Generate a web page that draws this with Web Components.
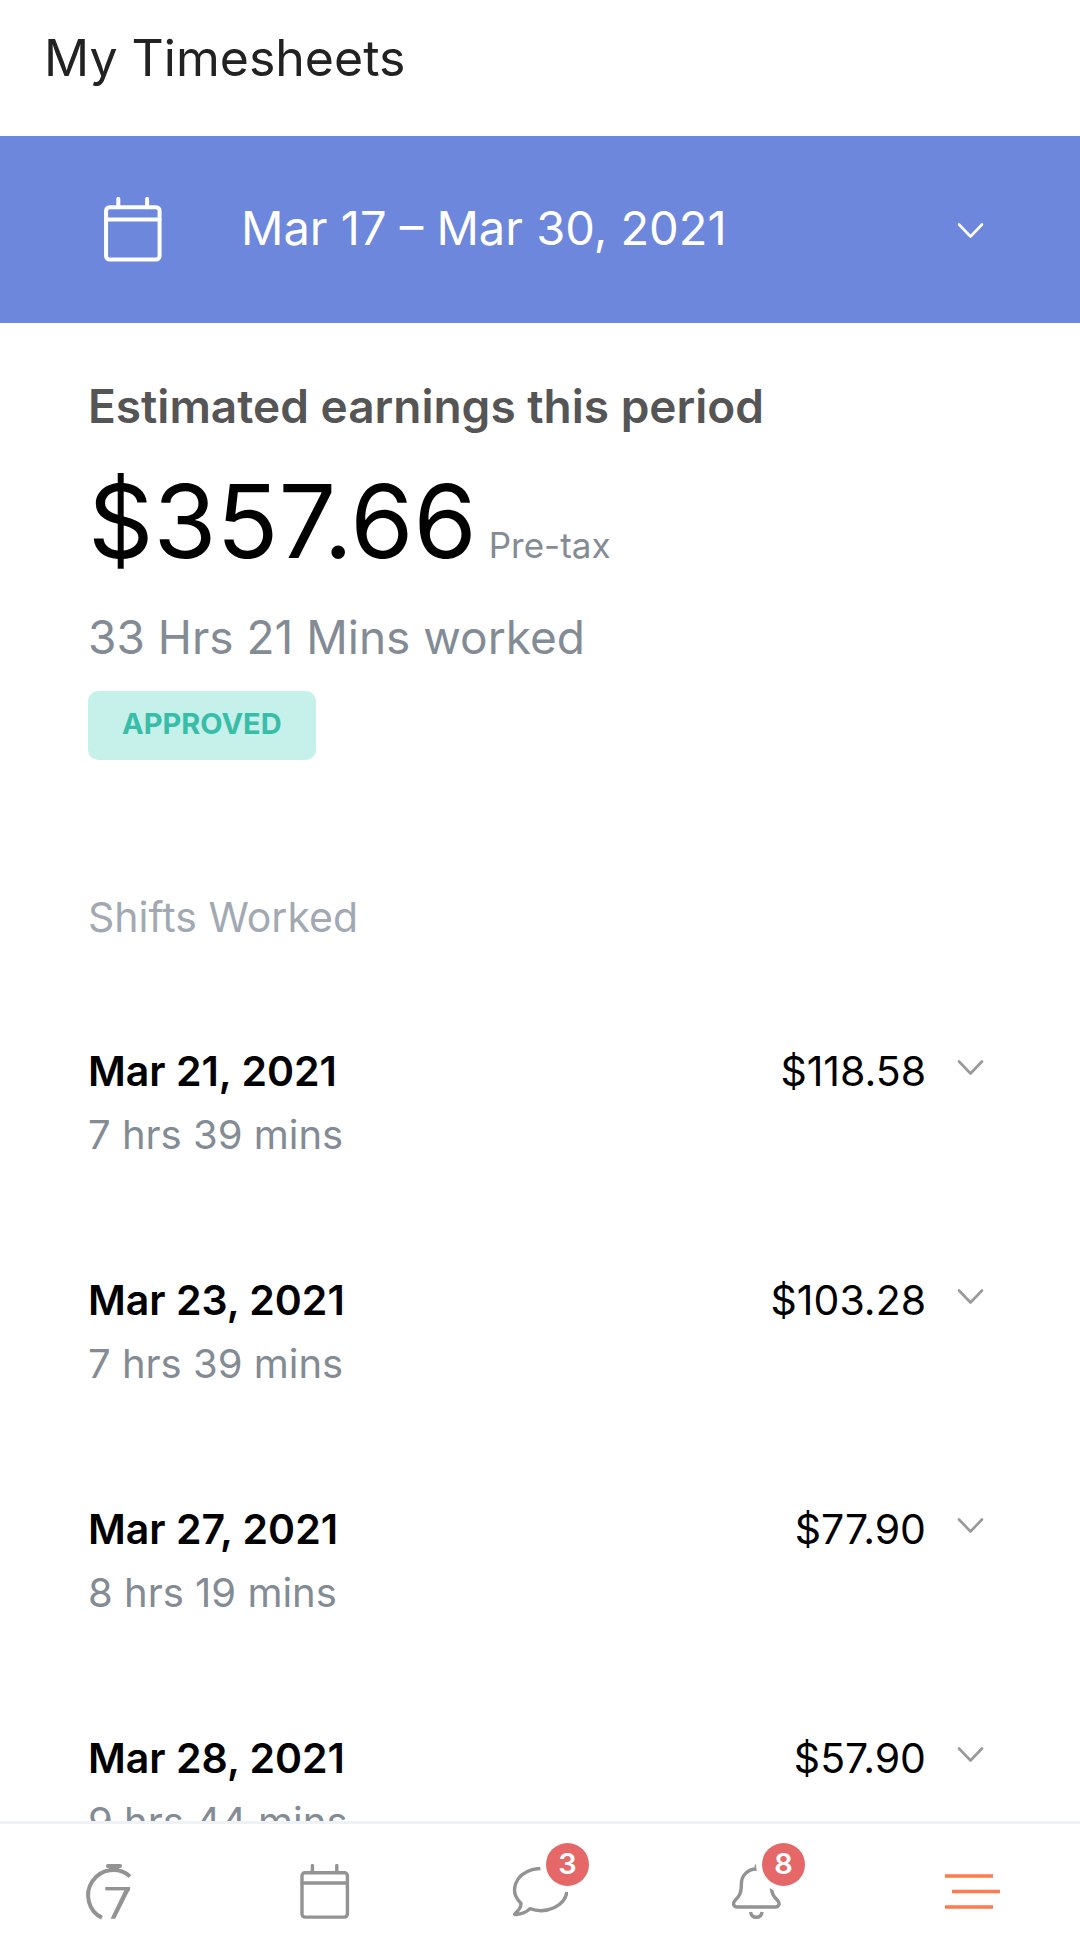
<!DOCTYPE html>
<html lang="en">
<head>
<meta charset="utf-8">
<meta name="viewport" content="width=device-width, initial-scale=1">
<title>My Timesheets</title>
<style>
  html, body { margin: 0; height: 100%; }
  body {
    --ink: #000;
    --muted: #838b94;
    --icon: #939393;
    --gutter: 88px;
    font-family: Inter, "Open Sans", sans-serif;
    background: #fff;
    color: var(--ink);
  }
</style>
</head>
<body>
<timesheet-app>
  <page-title slot="header">My Timesheets</page-title>
  <period-picker slot="header">Mar 17 – Mar 30, 2021</period-picker>

  <earnings-summary>
    <span slot="title">Estimated earnings this period</span>
    <span slot="amount">$357.66</span>
    <span slot="note">Pre-tax</span>
    <span slot="hours">33 Hrs 21 Mins worked</span>
    <status-pill slot="status">APPROVED</status-pill>
  </earnings-summary>

  <shift-list heading="Shifts Worked">
    <shift-row date="Mar 21, 2021" duration="7 hrs 39 mins" pay="$118.58"></shift-row>
    <shift-row date="Mar 23, 2021" duration="7 hrs 39 mins" pay="$103.28"></shift-row>
    <shift-row date="Mar 27, 2021" duration="8 hrs 19 mins" pay="$77.90"></shift-row>
    <shift-row date="Mar 28, 2021" duration="9 hrs 44 mins" pay="$57.90"></shift-row>
  </shift-list>

  <tab-bar slot="footer">
    <tab-item icon="clock" label="Home"></tab-item>
    <tab-item icon="calendar" label="Schedule"></tab-item>
    <tab-item icon="chat" label="Chat" badge="3"></tab-item>
    <tab-item icon="bell" label="Notifications" badge="8"></tab-item>
    <tab-item icon="menu" label="Menu" current></tab-item>
  </tab-bar>
</timesheet-app>

<script>
const ICONS = {
  calendar: '<rect x="6" y="8.7" width="45.4" height="44.4" rx="3"/><path d="M6 19h45.4M16.4 1.6v7M40.8 1.6v7" />',
  clock: '<path d="M28 2h12" stroke-width="4"/><path d="M29 4h10l1 3H28z" fill="currentColor" stroke="none"/><path d="M50 12.4A25.2 25.2 0 1 0 22 53.8" stroke-width="4" stroke-linecap="butt"/><path d="M25.3 24.7H50" stroke-width="3.4" stroke-linecap="butt"/><path d="M45.9 23h4.2v2L35.2 54.8h-4.6z" fill="currentColor" stroke="none"/>',
  chat: '<path d="M18 44.7A26.2 21 0 1 0 8.9 39.2C9.3 42.6 6.6 46.6 3.2 49.4C2.3 50.2 2.6 50.6 3.6 50.5C9 50.3 14.6 48.3 18 44.7Z"/>',
  bell: '<path d="M28.3 5V1.8" /><path d="M28.3 5C19.5 5 13.4 11.6 13.4 19.8C13.4 29 11.6 32 7.2 36.3C4.2 39.3 5.6 43 9.2 43H47.4C51 43 52.4 39.3 49.4 36.3C45 32 43.2 29 43.2 19.8C43.2 11.6 37.1 5 28.3 5Z"/><path d="M22.6 48C23 51.4 25.4 53.3 28.3 53.3S33.6 51.4 34 48" stroke-linecap="butt"/>',
  menu: '<path d="M1 12h48M8 27.5h48M1 43h48" stroke-width="3.6" stroke-linecap="butt"/>',
  chevron: '<path d="M17 22.5 28.5 34.5 40 22.5" stroke-width="2.6"/>'
};

function define(name, render, wire) {
  customElements.define(name, class extends HTMLElement {
    constructor() {
      super();
      this.attachShadow({ mode: 'open' });
    }
    connectedCallback() {
      this.shadowRoot.innerHTML = render(this);
      if (wire) wire(this);
    }
  });
}

const BUTTON_RESET = 'border:0;margin:0;background:none;font:inherit;color:inherit;text-align:left;cursor:pointer;';

define('ui-icon', el => `
  <style>
    :host { display: block; flex: none; width: var(--icon-size, 56px); height: var(--icon-size, 56px); }
    svg { display: block; width: 100%; height: 100%; }
  </style>
  <svg viewBox="0 0 56 56" fill="none" stroke="currentColor" stroke-width="3.4"
       stroke-linecap="round" stroke-linejoin="round" aria-hidden="true">${ICONS[el.getAttribute('name')]}</svg>`);

define('timesheet-app', () => `
  <style>
    :host { display: flex; flex-direction: column; height: 100vh; }
    header, footer { flex: none; }
    main { flex: 1; min-height: 0; overflow: hidden auto; scrollbar-width: none; }
  </style>
  <header><slot name="header"></slot></header>
  <main><slot></slot></main>
  <footer><slot name="footer"></slot></footer>`);

define('page-title', () => `
  <style>
    :host { display: block; padding: 28px 44px 48px; }
    h1 { margin: 0; font-size: 50px; line-height: 60px; font-weight: 400; color: #222; }
  </style>
  <h1><slot></slot></h1>`);

define('period-picker', () => `
  <style>
    :host { display: block; background: #6d87dc; color: #fff; }
    button {
      ${BUTTON_RESET}
      display: flex; align-items: center; width: 100%; min-height: 187px;
      padding: 0 var(--gutter); box-sizing: border-box;
      font-size: 47px; line-height: 56px;
    }
    .calendar { --icon-size: 66px; margin: 0 11px; }
    .label { flex: 1; padding: 0 0 4px 65px; }
    .chevron { margin-right: -6px; }
  </style>
  <button type="button" aria-haspopup="listbox">
    <ui-icon class="calendar" name="calendar"></ui-icon>
    <span class="label"><slot></slot></span>
    <ui-icon class="chevron" name="chevron"></ui-icon>
  </button>`);

define('status-pill', () => `
  <style>
    :host {
      display: block; padding: 15px 34px 19px; border-radius: 10px;
      background: #c6f0ea; color: #38bda9;
      font-size: 29px; line-height: 35px; font-weight: 700;
    }
  </style>
  <slot></slot>`);

define('earnings-summary', () => `
  <style>
    :host { display: block; padding: 57px var(--gutter) 0; }
    section { display: flex; flex-direction: column; align-items: flex-start; gap: 28px; }
    h2, p { margin: 0; font-size: 46px; line-height: 52px; }
    h2 { font-weight: 600; color: #555; }
    .hours { color: var(--muted); }
    .amount { display: flex; align-items: baseline; gap: 12px; font-size: 102px; line-height: 123px; }
    .note { font-size: 35px; line-height: 52px; color: var(--muted); }
  </style>
  <section>
    <h2><slot name="title"></slot></h2>
    <p class="amount"><slot name="amount"></slot><span class="note"><slot name="note"></slot></span></p>
    <p class="hours"><slot name="hours"></slot></p>
    <slot name="status"></slot>
  </section>`);

define('shift-list', el => `
  <style>
    :host { display: block; padding: 125px 0 100px; font-size: 41px; line-height: 64px; }
    h2 { margin: 0 var(--gutter) 90px; font: inherit; color: #a2a9b3; }
    .rows { display: flex; flex-direction: column; gap: 101px; }
  </style>
  <h2>${el.getAttribute('heading')}</h2>
  <div class="rows" role="list"><slot></slot></div>`);

define('shift-row', el => `
  <style>
    :host { display: block; }
    button {
      ${BUTTON_RESET}
      display: flex; justify-content: space-between; align-items: flex-start;
      width: 100%; padding: 0 var(--gutter); box-sizing: border-box;
    }
    .when, .pay { display: flex; }
    .when { flex-direction: column; }
    .date { font-weight: 600; }
    .time { font-size: 40px; color: var(--muted); }
    .pay { gap: 16px; margin-right: -6px; }
    ui-icon { color: #999; }
  </style>
  <button type="button" aria-expanded="false">
    <span class="when">
      <span class="date">${el.getAttribute('date')}</span>
      <span class="time">${el.getAttribute('duration')}</span>
    </span>
    <span class="pay">${el.getAttribute('pay')}<ui-icon name="chevron"></ui-icon></span>
  </button>`, el => el.setAttribute('role', 'listitem'));

define('tab-bar', () => `
  <style>
    :host { display: block; border-top: 3px solid #eef2f7; background: #fff; }
    nav { display: flex; }
  </style>
  <nav aria-label="Main"><slot></slot></nav>`);

define('tab-item', el => `
  <style>
    :host { display: block; flex: 1; color: var(--icon); }
    :host([current]) { color: #ff7a4d; }
    a { display: flex; justify-content: center; padding: 40px 0 34px; color: inherit; text-decoration: none; }
    .mark { position: relative; }
    .badge {
      position: absolute; left: 34px; top: -21px; width: 43px; height: 43px;
      border-radius: 50%; background: #e66767; box-shadow: 0 0 0 6px #fff;
      color: #fff; font-size: 29px; line-height: 41px; font-weight: 600; text-align: center;
    }
  </style>
  <a href="#${el.getAttribute('icon')}" aria-label="${el.getAttribute('label')}">
    <span class="mark">
      <ui-icon name="${el.getAttribute('icon')}"></ui-icon>
      ${el.hasAttribute('badge') ? `<span class="badge">${el.getAttribute('badge')}</span>` : ''}
    </span>
  </a>`);
</script>
</body>
</html>
